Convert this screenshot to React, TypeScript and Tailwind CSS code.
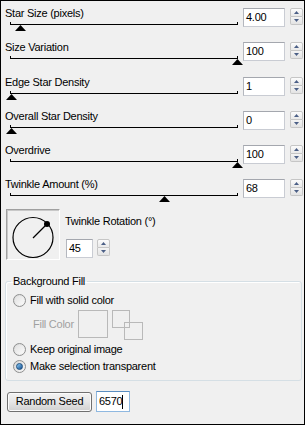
import React from "react";

type Slider = { label: string; value: string; pos: number; h: string };

const sliders: Slider[] = [
  { label: "Star Size (pixels)", value: "4.00", pos: 10, h: "h-[34px]" },
  { label: "Size Variation", value: "100", pos: 227, h: "h-[35px]" },
  { label: "Edge Star Density", value: "1", pos: 1, h: "h-[34px]" },
  { label: "Overall Star Density", value: "0", pos: 1, h: "h-[34px]" },
  { label: "Overdrive", value: "100", pos: 227, h: "h-[34px]" },
  { label: "Twinkle Amount (%)", value: "68", pos: 154, h: "h-[31px]" },
];

function Arrow({ up }: { up?: boolean }) {
  return (
    <svg width="5" height="3" viewBox="0 0 5 3">
      <polygon points={up ? "0,3 5,3 2.5,0" : "0,0 5,0 2.5,3"} fill="#4b5f86" />
    </svg>
  );
}

function Spinner({ className = "" }: { className?: string }) {
  return (
    <div className={`flex flex-col w-[13px] h-[17px] mt-px ${className}`}>
      <div className="flex-1 flex items-center justify-center border border-[#c6c6c6] rounded-t-[2px] bg-linear-to-b from-[#fcfcfc] to-[#e9e9e9]">
        <Arrow up />
      </div>
      <div className="flex-1 flex items-center justify-center border border-t-0 border-[#c6c6c6] rounded-b-[2px] bg-linear-to-b from-[#f4f4f4] to-[#e3e3e3]">
        <Arrow />
      </div>
    </div>
  );
}

function TextBox({ value, w }: { value: string; w: string }) {
  return (
    <div
      className={`${w} h-[19px] mt-px bg-white border border-[#c9ccd3] border-t-[#a4a7ae] border-l-[#b4b7be] pl-[2px] leading-[17px]`}
    >
      {value}
    </div>
  );
}

function Radio({ checked }: { checked?: boolean }) {
  return (
    <div className="w-[13px] h-[13px] rounded-full border border-[#8e8f8f] bg-linear-to-br from-[#d8d8d8] to-[#f8f8f8] flex items-center justify-center shrink-0">
      {checked ? (
        <div className="w-[7px] h-[7px] rounded-full bg-linear-to-br from-[#8fd0fb] to-[#11508f] border border-[#1d4f80]" />
      ) : (
        <div className="w-[9px] h-[9px] rounded-full bg-linear-to-br from-[#e2e2e2] to-[#fafafa]" />
      )}
    </div>
  );
}

export default function App() {
  return (
    <div className="w-[305px] h-[425px] border border-black bg-[#f0f0f0] text-[11px] tracking-[-0.25px] text-black font-['Liberation_Sans',Arial,sans-serif] pt-[6px] overflow-hidden">
      {sliders.map((s) => (
        <div key={s.label} className={`flex items-start ${s.h}`}>
          <div className="w-[242px]">
            <div className="pl-[4px] leading-[13px]">{s.label}</div>
            <div className="relative ml-[9px] mt-[2px] w-[228px] h-[3px] border-l border-r border-b border-black">
              <svg
                className="absolute top-[3px]"
                style={{ left: s.pos - 6 }}
                width="11"
                height="6"
                viewBox="0 0 11 6"
              >
                <polygon points="0,6 11,6 5.5,0" fill="#000" />
              </svg>
            </div>
          </div>
          <TextBox value={s.value} w="w-[42px]" />
          <Spinner className="ml-[5px]" />
        </div>
      ))}

      {/* rotation dial */}
      <div className="flex items-start">
        <div className="ml-[5px] w-[54px] h-[51px] border border-t-[#a0a0a0] border-l-[#a0a0a0] border-r-white border-b-white shadow-[inset_1px_1px_0_#c8c8c8]">
          <svg width="52" height="49" viewBox="0 0 52 49">
            <circle cx="26" cy="27.5" r="20" fill="none" stroke="#000" strokeWidth="1.2" />
            <line x1="26" y1="28" x2="40" y2="14" stroke="#000" strokeWidth="1.2" />
            <circle cx="40" cy="14" r="3" fill="#000" />
          </svg>
        </div>
        <div className="ml-[5px]">
          <div className="mt-[6px] leading-[13px]">Twinkle Rotation (°)</div>
          <div className="flex items-start mt-[10px] ml-px">
            <TextBox value="45" w="w-[27px]" />
            <Spinner className="ml-[4px]" />
          </div>
        </div>
      </div>

      {/* background fill group */}
      <fieldset className="ml-[4px] mt-[15px] w-[297px] border border-[#d5dfe5] rounded-[3px] shadow-[inset_1px_1px_0_#fff] pb-[7px]">
        <legend className="ml-[5px] px-[2px] leading-[13px]">Background Fill</legend>
        <div className="flex items-center h-[13px] mt-[6px] pl-[7px]">
          <Radio />
          <span className="ml-[4px] leading-[13px]">Fill with solid color</span>
        </div>
        <div className="flex items-start mt-[3px] pl-[27px]">
          <span className="w-[45px] h-[28px] flex items-center text-[#a0a0a0]">Fill Color</span>
          <div className="w-[30px] h-[28px] border border-[#b9b9b9]" />
          <svg className="ml-[4px]" width="31" height="30" viewBox="0 0 31 30">
            <rect x="0.5" y="0.5" width="17" height="17" fill="none" stroke="#b9b9b9" />
            <rect x="12.5" y="12.5" width="18" height="17" fill="none" stroke="#b9b9b9" />
          </svg>
        </div>
        <div className="flex items-center h-[13px] mt-[3px] pl-[7px]">
          <Radio />
          <span className="ml-[4px] leading-[13px]">Keep original image</span>
        </div>
        <div className="flex items-center h-[13px] mt-[4px] pl-[7px]">
          <Radio checked />
          <span className="ml-[4px] leading-[13px]">Make selection transparent</span>
        </div>
      </fieldset>

      {/* seed */}
      <div className="flex items-center mt-[10px] ml-[6px]">
        <div className="w-[85px] h-[20px] flex items-center justify-center border border-[#707070] rounded-[3px] bg-linear-to-b from-[#f3f3f3] via-[#e6e6e6] to-[#d0d0d0] shadow-[inset_0_0_0_1px_#fbfbfb]">
          Random Seed
        </div>
        <div className="ml-[4px] w-[34px] h-[21px] bg-white border border-[#8fb8e0] border-t-[#5b8ec2] pl-[2px] flex items-center">
          <span>6570</span>
          <span className="inline-block w-px h-[14px] bg-black" />
        </div>
      </div>
    </div>
  );
}
